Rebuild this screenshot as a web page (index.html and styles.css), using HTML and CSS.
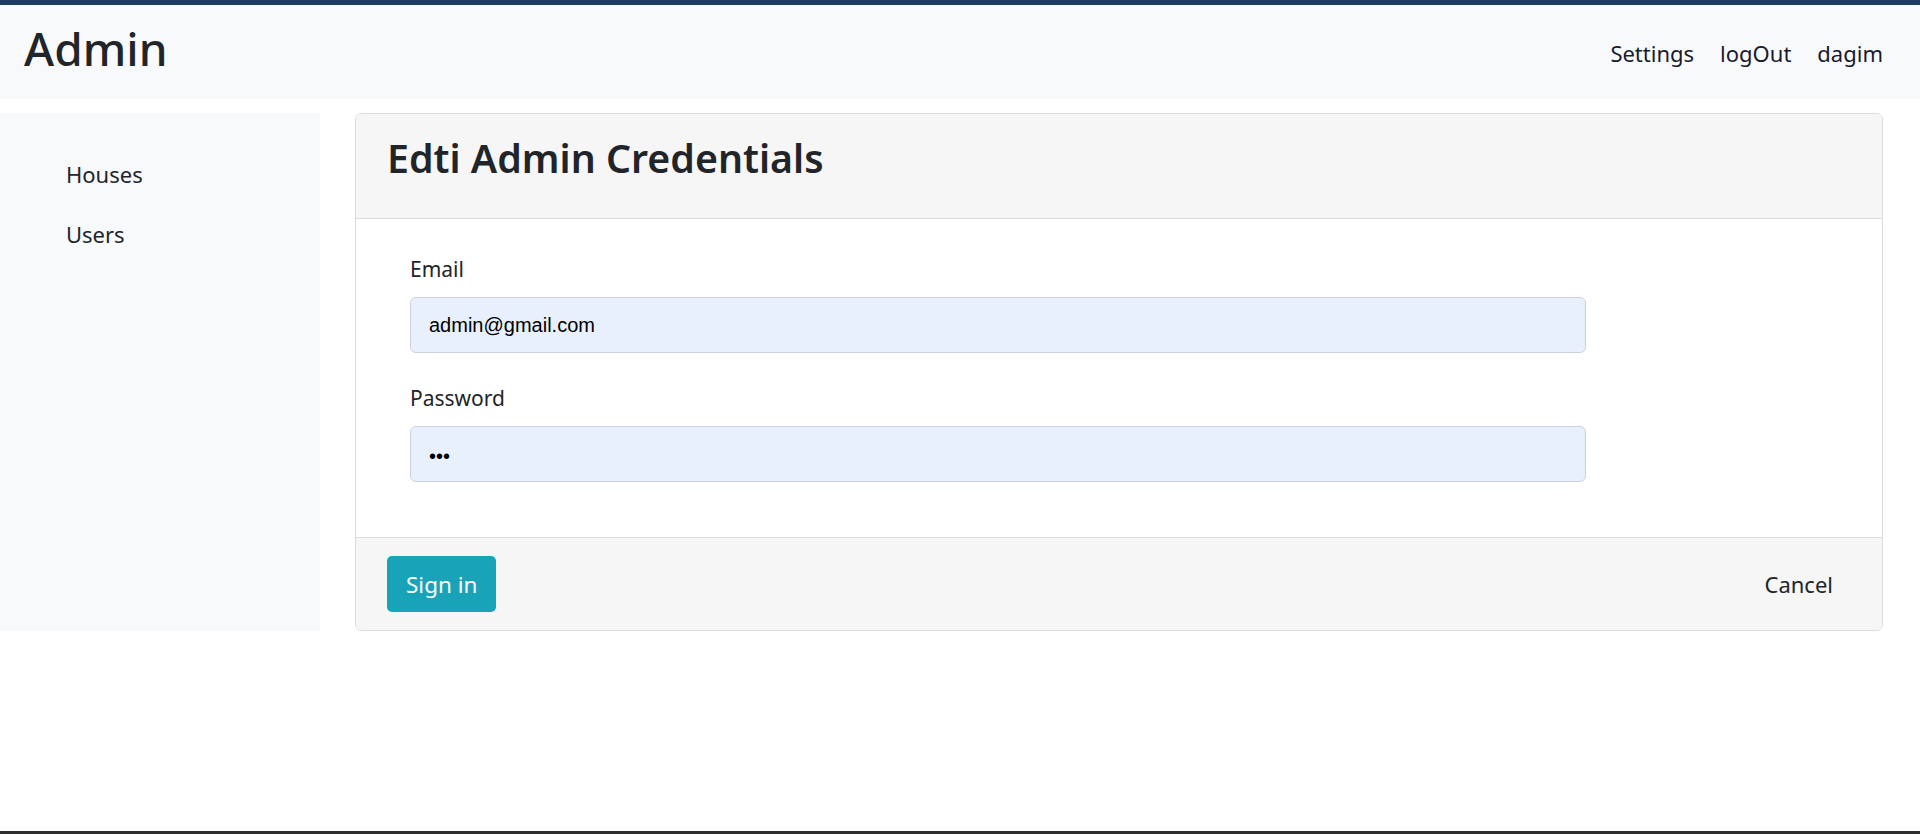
FILE: index.html
```html
<!DOCTYPE html>
<html lang="en">
<head>
<meta charset="utf-8">
<title>Admin</title>
<link rel="stylesheet" href="styles.css">
</head>
<body>
<div class="page">
  <header class="navbar">
    <div class="brand">Admin</div>
    <nav class="nav-links">
      <a class="nav-link" href="#">Settings</a>
      <a class="nav-link" href="#">logOut</a>
      <a class="nav-link" href="#">dagim</a>
    </nav>
  </header>
  <main class="main">
    <aside class="sidebar">
      <a class="side-link" href="#">Houses</a>
      <a class="side-link" href="#">Users</a>
    </aside>
    <section class="card">
      <div class="card-header">
        <h2 class="card-title">Edti Admin Credentials</h2>
      </div>
      <div class="card-body">
        <div class="form-group">
          <label class="form-label">Email</label>
          <div class="form-control">admin@gmail.com</div>
        </div>
        <div class="form-group">
          <label class="form-label">Password</label>
          <div class="form-control password">•••</div>
        </div>
      </div>
      <div class="card-footer">
        <button class="btn-info">Sign in</button>
        <a class="btn-link" href="#">Cancel</a>
      </div>
    </section>
  </main>
  <div class="spacer"></div>
  <div class="bottom-edge"></div>
</div>
</body>
</html>
```

FILE: styles.css
```css
* { box-sizing: border-box; }
html, body { margin: 0; padding: 0; }
body {
  font-family: "Noto Sans", "Open Sans", sans-serif;
  color: #212529;
  background: #ffffff;
}
a { text-decoration: none; color: #212529; }

.page {
  min-height: 834px;
  display: flex;
  flex-direction: column;
}

/* top navbar */
.navbar {
  border-top: 5px solid #1f3a63;
  background: #f8f9fa;
  height: 99px;
  display: flex;
  align-items: flex-start;
  justify-content: space-between;
  padding: 20px 37px 0 24px;
}
.brand {
  font-size: 46px;
  font-weight: 500;
  line-height: 46px;
}
.nav-links {
  display: flex;
  gap: 26px;
  margin-top: 13px;
}
.nav-link {
  font-size: 22px;
  line-height: 30px;
  color: #1a1a2e;
}

/* main area */
.main {
  display: flex;
  margin-top: 14px;
  padding-right: 37px;
}
.sidebar {
  width: 320px;
  flex-shrink: 0;
  background: #f8f9fa;
  display: flex;
  flex-direction: column;
  padding: 46px 0 0 66px;
  gap: 30px;
}
.side-link {
  font-size: 22px;
  line-height: 30px;
  color: #212529;
}

/* card */
.card {
  flex: 1;
  margin-left: 35px;
  border: 1px solid #dcdcdc;
  border-radius: 6px;
  overflow: hidden;
  display: flex;
  flex-direction: column;
}
.card-header {
  background: #f6f6f6;
  border-bottom: 1px solid #dcdcdc;
  height: 105px;
  padding: 25px 30px 0 31px;
}
.card-title {
  margin: 0;
  font-size: 39.3px;
  font-weight: 600;
  line-height: 39px;
}
.card-body {
  background: #ffffff;
  padding: 36px 0 55px 54px;
  display: flex;
  flex-direction: column;
  gap: 31px;
}
.form-group {
  display: flex;
  flex-direction: column;
  gap: 14px;
  width: 1176px;
}
.form-label {
  font-size: 21px;
  line-height: 28px;
  color: #212529;
}
.form-control {
  height: 56px;
  background: #e8f0fe;
  border: 1px solid #ccd3de;
  border-radius: 6px;
  padding: 0 18px;
  display: flex;
  align-items: center;
  font-family: "Liberation Sans", Arial, sans-serif;
  font-size: 20px;
  color: #000;
}
.form-control.password {
  padding-top: 4px;
}

/* footer */
.card-footer {
  background: #f6f6f6;
  border-top: 1px solid #dcdcdc;
  padding: 18px 49px 18px 31px;
  display: flex;
  align-items: center;
  justify-content: space-between;
}
.btn-info {
  background: #18a3b8;
  border: none;
  border-radius: 5px;
  color: #ffffff;
  font-family: "Noto Sans", "Open Sans", sans-serif;
  font-size: 22.5px;
  height: 56px;
  padding: 0 19px;
}
.btn-link {
  font-size: 22px;
  color: #212529;
}

.spacer { flex: 1; }
.bottom-edge {
  height: 3px;
  background: #2e2e2e;
}
```
